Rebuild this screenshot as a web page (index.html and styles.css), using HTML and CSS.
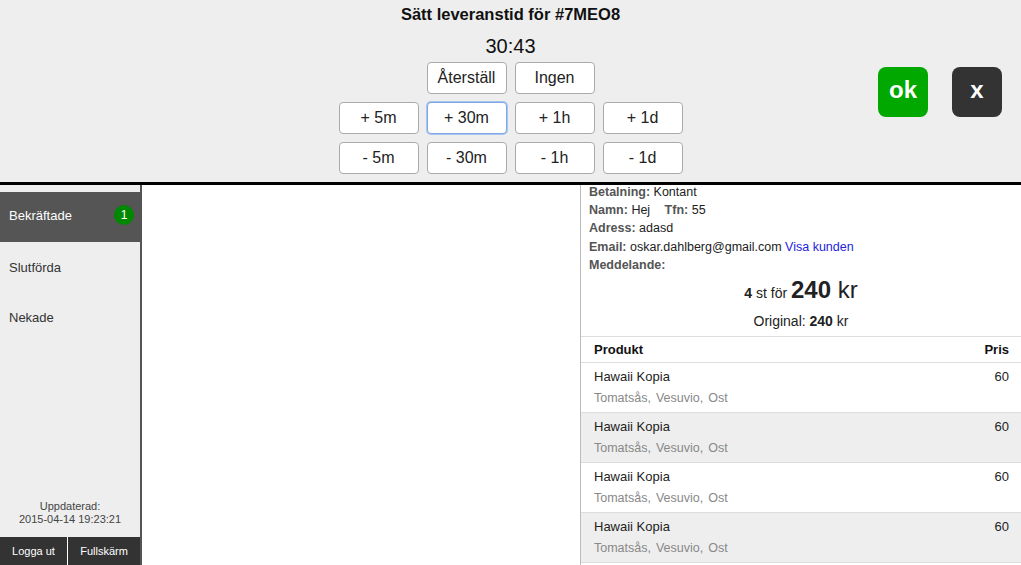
FILE: index.html
```html
<!DOCTYPE html>
<html lang="sv">
<head>
<meta charset="utf-8">
<title>Leveranstid</title>
<link rel="stylesheet" href="styles.css">
</head>
<body>
<div class="top">
  <div class="top-side"></div>
  <div class="top-center">
    <div class="title">Sätt leveranstid för #7MEO8</div>
    <div class="time">30:43</div>
    <div class="btn-grid">
      <button class="tbtn c2">Återställ</button>
      <button class="tbtn">Ingen</button>
      <button class="tbtn c1">+ 5m</button>
      <button class="tbtn focus">+ 30m</button>
      <button class="tbtn">+ 1h</button>
      <button class="tbtn">+ 1d</button>
      <button class="tbtn">- 5m</button>
      <button class="tbtn">- 30m</button>
      <button class="tbtn">- 1h</button>
      <button class="tbtn">- 1d</button>
    </div>
  </div>
  <div class="top-side actions">
    <button class="big ok">ok</button>
    <button class="big close">x</button>
  </div>
</div>
<div class="main">
  <div class="sidebar">
    <div class="nav">
      <div class="nav-item active"><span>Bekräftade</span><span class="badge">1</span></div>
      <div class="nav-item"><span>Slutförda</span></div>
      <div class="nav-item"><span>Nekade</span></div>
    </div>
    <div class="updated">Uppdaterad:<br>2015-04-14 19:23:21</div>
    <div class="bottom-btns">
      <div class="bbtn">Logga ut</div>
      <div class="bbtn">Fullskärm</div>
    </div>
  </div>
  <div class="middle"></div>
  <div class="detail">
    <div class="info">
      <div class="line"><b>Betalning:</b> Kontant</div>
      <div class="line"><b>Namn:</b> Hej <span class="gap"></span><b>Tfn:</b> 55</div>
      <div class="line"><b>Adress:</b> adasd</div>
      <div class="line"><b>Email:</b> oskar.dahlberg@gmail.com <a class="link">Visa kunden</a></div>
      <div class="line"><b>Meddelande:</b></div>
    </div>
    <div class="total"><b>4</b> st för <span class="big-num"><b>240</b> kr</span></div>
    <div class="original">Original: <b>240</b> kr</div>
    <div class="table">
      <div class="thead"><span>Produkt</span><span>Pris</span></div>
      <div class="row">
        <div class="row-top"><span>Hawaii Kopia</span><span>60</span></div>
        <div class="ingr"><span>Tomatsås,</span><span>Vesuvio,</span><span>Ost</span></div>
      </div>
      <div class="row alt">
        <div class="row-top"><span>Hawaii Kopia</span><span>60</span></div>
        <div class="ingr"><span>Tomatsås,</span><span>Vesuvio,</span><span>Ost</span></div>
      </div>
      <div class="row">
        <div class="row-top"><span>Hawaii Kopia</span><span>60</span></div>
        <div class="ingr"><span>Tomatsås,</span><span>Vesuvio,</span><span>Ost</span></div>
      </div>
      <div class="row alt">
        <div class="row-top"><span>Hawaii Kopia</span><span>60</span></div>
        <div class="ingr"><span>Tomatsås,</span><span>Vesuvio,</span><span>Ost</span></div>
      </div>
    </div>
  </div>
</div>
</body>
</html>
```

FILE: styles.css
```css
* { box-sizing: border-box; }
html, body { margin: 0; padding: 0; height: 100%; }
body {
  font-family: "Liberation Sans", Arial, sans-serif;
  color: #222;
  overflow: hidden;
  width: 1021px;
  height: 565px;
  display: flex;
  flex-direction: column;
}
.top {
  height: 185px;
  flex: none;
  background: #eee;
  border-bottom: 3px solid #000;
  display: grid;
  grid-template-columns: 1fr auto 1fr;
  padding: 4px 0 8px;
}
.top-center {
  display: flex;
  flex-direction: column;
  align-items: center;
}
.title {
  font-weight: bold;
  font-size: 16.5px;
  line-height: 20px;
  color: #111;
}
.time {
  font-size: 20px;
  line-height: 24px;
  margin-top: 10px;
  color: #111;
}
.btn-grid {
  margin-top: 4px;
  display: grid;
  grid-template-columns: repeat(4, 80px);
  grid-auto-rows: 32px;
  gap: 8px;
}
.tbtn {
  font-family: "Liberation Sans", Arial, sans-serif;
  font-size: 16px;
  color: #222;
  background: #fff;
  border: 1px solid #aaa;
  border-radius: 4px;
  padding: 0;
}
.tbtn.c2 { grid-column: 2; }
.tbtn.c1 { grid-column: 1; }
.tbtn.focus {
  border-color: #7ea6e4;
  box-shadow: 0 0 0 1px #a9c4ee;
}
.actions {
  display: flex;
  justify-content: flex-end;
  align-items: center;
  gap: 24px;
  padding-right: 19px;
  padding-top: 5px;
}
.big {
  width: 50px;
  height: 50px;
  border: none;
  border-radius: 8px;
  color: #fff;
  font-family: "Liberation Sans", Arial, sans-serif;
  font-weight: bold;
  font-size: 24px;
  padding: 0 0 3px;
}
.ok { background: #00a800; }
.close { background: #333; }
.main {
  flex: 1;
  display: flex;
  min-height: 0;
}
.sidebar {
  width: 142px;
  flex: none;
  background: #eee;
  border-right: 2px solid #555;
  display: flex;
  flex-direction: column;
  padding-top: 7px;
}
.nav { flex: 1; }
.nav-item {
  height: 50px;
  display: flex;
  align-items: center;
  justify-content: space-between;
  padding: 0 6px 0 9px;
  font-size: 13px;
  color: #333;
}
.nav-item.active { background: #555; color: #fff; padding-bottom: 4px; }
.badge {
  width: 20px;
  height: 20px;
  border-radius: 50%;
  background: #080;
  color: #fff;
  font-size: 12px;
  display: flex;
  align-items: center;
  justify-content: center;
}
.updated {
  text-align: center;
  font-size: 11px;
  line-height: 13px;
  color: #444;
  margin-bottom: 11px;
}
.bottom-btns {
  display: flex;
  height: 28px;
  background: #333;
}
.bbtn {
  color: #fff;
  font-size: 11px;
  display: flex;
  align-items: center;
  justify-content: center;
}
.bbtn:first-child { width: 68px; border-right: 1px solid #fff; }
.bbtn:last-child { flex: 1; }
.middle {
  width: 438px;
  flex: none;
  background: #fff;
}
.detail {
  flex: 1;
  border-left: 1px solid #bbb;
  background: #fff;
  overflow: hidden;
}
.info {
  margin-top: -2px;
  padding-left: 8px;
  font-size: 12.5px;
}
.line { line-height: 18.2px; color: #222; }
.line b { color: #555; }
.gap { display: inline-block; width: 11px; }
.link { color: #2323e0; }
.total {
  text-align: center;
  font-size: 14px;
  margin-top: 1px;
  line-height: 30px;
}
.big-num { font-size: 24px; }
.original {
  text-align: center;
  font-size: 14px;
  line-height: 20px;
  margin-top: 3px;
  padding-bottom: 5px;
  border-bottom: 1px solid #ddd;
}
.thead {
  display: flex;
  justify-content: space-between;
  font-weight: bold;
  font-size: 13px;
  line-height: 25px;
  padding: 0 12px 0 13px;
  border-bottom: 1px solid #ddd;
  color: #111;
}
.row {
  height: 50px;
  padding: 5px 12px 0 13px;
  border-bottom: 1px solid #ddd;
}
.row.alt { background: #eee; }
.row-top {
  display: flex;
  justify-content: space-between;
  font-size: 13px;
  line-height: 18px;
}
.ingr {
  font-size: 12.5px;
  line-height: 24px;
  color: #888;
}
.ingr span { margin-right: 5px; }
```
